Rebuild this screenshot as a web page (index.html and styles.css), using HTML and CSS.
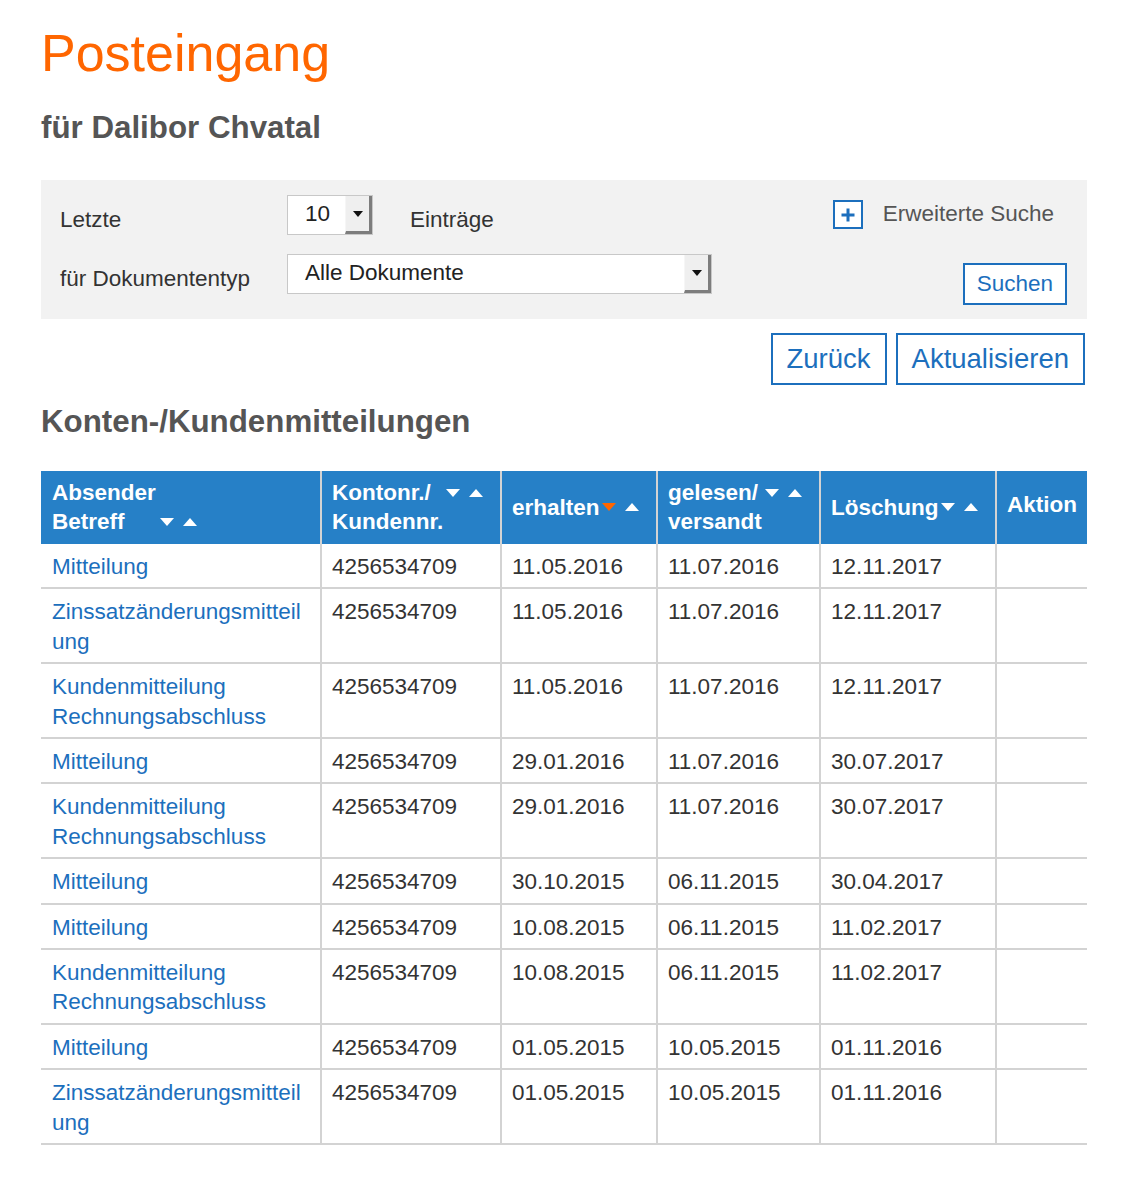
FILE: index.html
```html
<!DOCTYPE html>
<html lang="de">
<head>
<meta charset="utf-8">
<title>Posteingang</title>
<link rel="stylesheet" href="styles.css">
</head>
<body>
<div class="page">
  <h1 class="title">Posteingang</h1>
  <h2 class="subtitle">für Dalibor Chvatal</h2>

  <form class="filter">
    <div class="filter-fields">
      <span class="label">Letzte</span>
      <div class="select select-small">
        <span class="select-value">10</span>
        <span class="select-btn"><span class="caret"></span></span>
      </div>
      <span class="label label-after">Einträge</span>
      <span class="label">für Dokumententyp</span>
      <div class="select select-wide">
        <span class="select-value">Alle Dokumente</span>
        <span class="select-btn"><span class="caret"></span></span>
      </div>
    </div>
    <div class="filter-side">
      <a class="adv" href="#">
        <span class="plus-box">
          <svg width="16" height="16" viewBox="0 0 16 16"><path d="M8 1.5v13M1.5 8h13" stroke="#1c6fbd" stroke-width="3" fill="none"/></svg>
        </span>
        <span class="adv-text">Erweiterte Suche</span>
      </a>
      <button type="button" class="btn btn-search">Suchen</button>
    </div>
  </form>

  <div class="actions">
    <button type="button" class="btn btn-lg">Zurück</button>
    <button type="button" class="btn btn-lg">Aktualisieren</button>
  </div>

  <h3 class="section">Konten-/Kundenmitteilungen</h3>

  <table class="grid">
    <colgroup>
      <col class="c1"><col class="c2"><col class="c3"><col class="c4"><col class="c5"><col class="c6">
    </colgroup>
    <thead>
      <tr>
        <th class="first">Absender<br>Betreff<span class="sort sort-inline"><i class="tri-down"></i><i class="tri-up"></i></span></th>
        <th><div class="th-in"><span>Kontonr./<br>Kundennr.</span><span class="sort"><i class="tri-down"></i><i class="tri-up"></i></span></div></th>
        <th><div class="th-in"><span>erhalten</span><span class="sort"><i class="tri-down active"></i><i class="tri-up"></i></span></div></th>
        <th><div class="th-in"><span>gelesen/<br>versandt</span><span class="sort"><i class="tri-down"></i><i class="tri-up"></i></span></div></th>
        <th><div class="th-in"><span>Löschung</span><span class="sort"><i class="tri-down"></i><i class="tri-up"></i></span></div></th>
        <th class="th-action">Aktion</th>
      </tr>
    </thead>
    <tbody>
      <tr><td class="first"><a href="#">Mitteilung</a></td><td>4256534709</td><td>11.05.2016</td><td>11.07.2016</td><td>12.11.2017</td><td></td></tr>
      <tr><td class="first"><a href="#">Zinssatzänderungsmitteilung</a></td><td>4256534709</td><td>11.05.2016</td><td>11.07.2016</td><td>12.11.2017</td><td></td></tr>
      <tr><td class="first"><a href="#">Kundenmitteilung Rechnungsabschluss</a></td><td>4256534709</td><td>11.05.2016</td><td>11.07.2016</td><td>12.11.2017</td><td></td></tr>
      <tr><td class="first"><a href="#">Mitteilung</a></td><td>4256534709</td><td>29.01.2016</td><td>11.07.2016</td><td>30.07.2017</td><td></td></tr>
      <tr><td class="first"><a href="#">Kundenmitteilung Rechnungsabschluss</a></td><td>4256534709</td><td>29.01.2016</td><td>11.07.2016</td><td>30.07.2017</td><td></td></tr>
      <tr><td class="first"><a href="#">Mitteilung</a></td><td>4256534709</td><td>30.10.2015</td><td>06.11.2015</td><td>30.04.2017</td><td></td></tr>
      <tr><td class="first"><a href="#">Mitteilung</a></td><td>4256534709</td><td>10.08.2015</td><td>06.11.2015</td><td>11.02.2017</td><td></td></tr>
      <tr><td class="first"><a href="#">Kundenmitteilung Rechnungsabschluss</a></td><td>4256534709</td><td>10.08.2015</td><td>06.11.2015</td><td>11.02.2017</td><td></td></tr>
      <tr><td class="first"><a href="#">Mitteilung</a></td><td>4256534709</td><td>01.05.2015</td><td>10.05.2015</td><td>01.11.2016</td><td></td></tr>
      <tr><td class="first"><a href="#">Zinssatzänderungsmitteilung</a></td><td>4256534709</td><td>01.05.2015</td><td>10.05.2015</td><td>01.11.2016</td><td></td></tr>
    </tbody>
  </table>
</div>
</body>
</html>
```

FILE: styles.css
```css
* { box-sizing: border-box; }

body {
  margin: 0;
  background: #ffffff;
  font-family: "Liberation Sans", Arial, Helvetica, sans-serif;
  font-size: 22.5px;
  color: #333333;
}

.page {
  width: 1087px;
  padding: 27px 0 40px 41px;
}

.title {
  margin: 0;
  font-size: 52px;
  line-height: 52px;
  font-weight: normal;
  color: #ff6600;
}

.subtitle {
  margin: 33px 0 37px;
  font-size: 31.3px;
  line-height: 31px;
  font-weight: bold;
  color: #555555;
}

/* filter box */
.filter {
  display: flex;
  align-items: flex-start;
  margin: 0;
  padding: 15px 0 14px 19px;
  background: #f2f2f2;
}

.filter-fields {
  display: grid;
  grid-template-columns: 227px 86px auto;
  align-content: start;
  row-gap: 19px;
  align-items: start;
}

.label {
  margin-top: 10px;
  line-height: 30px;
  color: #333333;
}

.label-after {
  margin-left: 37px;
}

.select {
  display: flex;
  height: 40px;
  background: #ffffff;
  border: 1px solid #c8c8c8;
}

.select-small { width: 86px; }

.select-wide {
  grid-column: 2 / span 2;
  width: 425px;
}

.select-value {
  flex: 1;
  padding: 3px 0 0 17px;
  line-height: 30px;
  color: #222222;
}

.select-btn {
  display: flex;
  align-items: center;
  justify-content: center;
  width: 27px;
  background: #efefef;
  border-left: 1px solid #f6f6f6;
  border-right: 3px solid #7d7d7d;
  border-bottom: 3px solid #7d7d7d;
}

.caret {
  width: 0;
  height: 0;
  border-left: 5px solid transparent;
  border-right: 5px solid transparent;
  border-top: 6px solid #111111;
}

.filter-side {
  margin-left: auto;
  display: flex;
  flex-direction: column;
  align-items: flex-end;
}

.adv {
  display: flex;
  align-items: flex-start;
  gap: 20px;
  height: 29px;
  margin: 5px 33px 0 0;
  text-decoration: none;
}

.plus-box {
  display: flex;
  align-items: center;
  justify-content: center;
  width: 30px;
  height: 29px;
  background: #ffffff;
  border: 2px solid #1c6fbd;
}

.adv-text {
  margin-top: -1px;
  line-height: 30px;
  color: #555555;
}

.btn {
  font-family: inherit;
  background: #ffffff;
  color: #1c6fbd;
  border: 2px solid #1c6fbd;
  border-radius: 0;
  cursor: pointer;
}

.btn-search {
  margin: 34px 20px 0 0;
  padding: 4px 12px;
  font-size: 22.5px;
  line-height: 30px;
}

.actions {
  display: flex;
  justify-content: flex-end;
  gap: 9px;
  margin-top: 14px;
  padding-right: 2px;
}

.btn-lg {
  padding: 7px 14px;
  font-size: 27.5px;
  line-height: 34px;
}

.section {
  margin: 21px 0 34px;
  font-size: 31.3px;
  line-height: 31px;
  font-weight: bold;
  color: #555555;
}

/* table */
.grid {
  width: 1046px;
  table-layout: fixed;
  border-collapse: separate;
  border-spacing: 0;
  font-size: 22.5px;
}

.c1 { width: 279px; }
.c2 { width: 180px; }
.c3 { width: 156px; }
.c4 { width: 163px; }
.c5 { width: 176px; }
.c6 { width: 92px; }

.grid th {
  padding: 7px 17px 8px 10px;
  background: #2680c7;
  color: #ffffff;
  font-weight: bold;
  text-align: left;
  line-height: 29px;
  vertical-align: middle;
  border-left: 2px solid #d3d3d3;
}

.grid th.first {
  padding-left: 11px;
  border-left: none;
}

.grid th.th-action {
  padding-right: 4px;
  padding-bottom: 14px;
}

.th-in {
  display: flex;
  justify-content: space-between;
  align-items: flex-start;
}

.sort {
  display: flex;
  flex-shrink: 0;
  align-items: center;
  gap: 9px;
  height: 29px;
}

.sort-inline {
  display: inline-flex;
  vertical-align: top;
  margin-left: 35px;
}

.tri-down,
.tri-up {
  display: block;
  width: 0;
  height: 0;
  border-left: 7px solid transparent;
  border-right: 7px solid transparent;
}

.tri-down { border-top: 8px solid #ffffff; }
.tri-up { border-bottom: 8px solid #ffffff; }
.tri-down.active { border-top-color: #ff6600; }

.grid td {
  padding: 8px 11px 6px 10px;
  line-height: 29.4px;
  vertical-align: top;
  color: #333333;
  border-left: 2px solid #d3d3d3;
  border-bottom: 2px solid #d3d3d3;
  overflow-wrap: anywhere;
}

.grid td.first {
  padding-left: 11px;
  border-left: none;
}

.grid td a {
  color: #1c6fbd;
  text-decoration: none;
}
```
